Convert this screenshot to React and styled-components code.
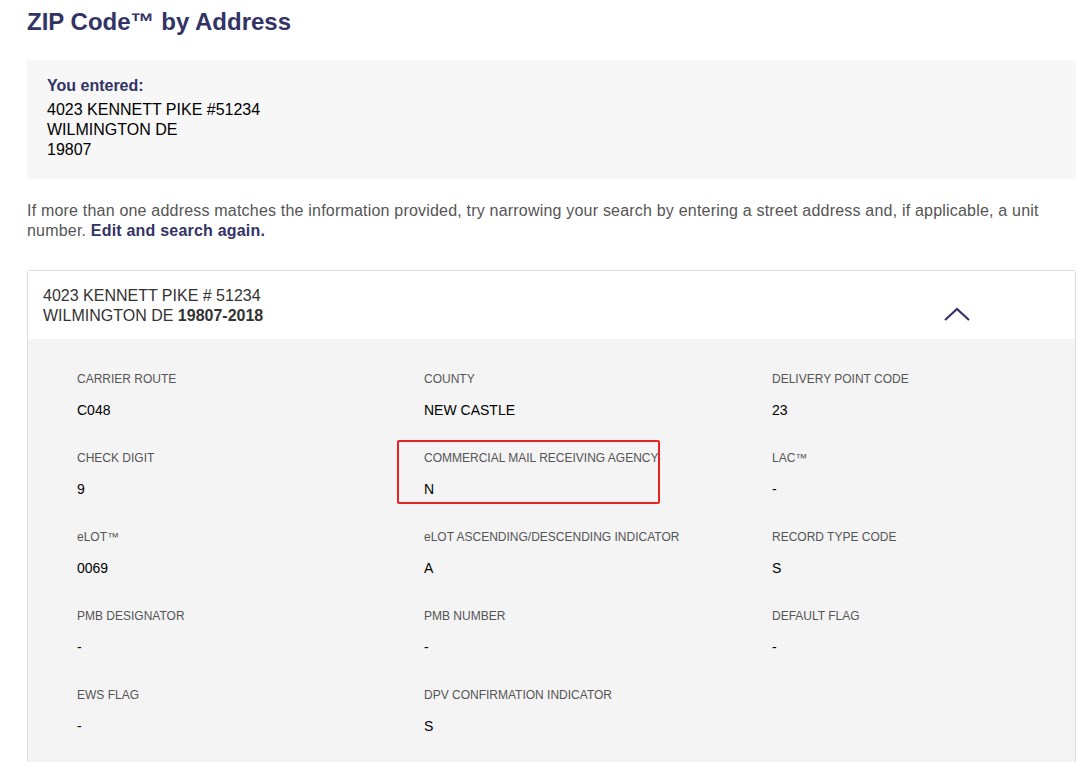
import React from "react";
import styled, { createGlobalStyle } from "styled-components";

const GlobalStyle = createGlobalStyle`
  body {
    margin: 0;
    background: #fff;
    font-family: "Liberation Sans", Arial, sans-serif;
    color: #000;
  }
`;

const Page = styled.div`
  padding: 0 2px 0 27px;
  overflow: hidden;
  height: 762px;
`;

const Title = styled.h1`
  margin: 0;
  padding-top: 8px;
  font-size: 24px;
  font-weight: 700;
  line-height: 28px;
  color: #333366;
`;

const EnteredBox = styled.div`
  margin-top: 24px;
  background: #f7f7f7;
  padding: 16px 20px 19px;
  font-size: 16px;
  line-height: 20px;
`;

const EnteredLabel = styled.div`
  font-weight: 700;
  color: #333366;
  margin-bottom: 4px;
`;

const Note = styled.p`
  margin: 22px 0 29px;
  padding-right: 30px;
  font-size: 16px;
  letter-spacing: 0.2px;
  line-height: 20px;
  color: #555;
`;

const NoteLink = styled.a`
  font-weight: 700;
  color: #333366;
  text-decoration: none;
`;

const Card = styled.div`
  border: 1px solid #ddd;
  border-radius: 3px;
  border-bottom: none;
`;

const CardHeader = styled.div`
  display: flex;
  align-items: center;
  justify-content: space-between;
  background: #fff;
  padding: 15px 104px 13px 15px;
  font-size: 16px;
  line-height: 20px;
  color: #333;
`;

const Chevron = styled.svg`
  width: 28px;
  height: 16px;
  margin-top: 16px;
`;

const Details = styled.div`
  display: grid;
  grid-template-columns: 347px 348px 1fr;
  row-gap: 27px;
  background: #f4f4f4;
  padding: 33px 0 40px 49px;
`;

const Cell = styled.div`
  position: relative;
`;

const Label = styled.div`
  font-size: 12px;
  line-height: 14px;
  color: #555;
`;

const Value = styled.div`
  margin-top: 10px;
  font-size: 14px;
  line-height: 28px;
  color: #000;
`;

const Highlight = styled.div`
  position: absolute;
  left: -27px;
  top: -11px;
  width: 263px;
  height: 64px;
  border: 2px solid #e62323;
  border-radius: 2px;
  box-sizing: border-box;
  pointer-events: none;
`;

const fields = [
  { label: "CARRIER ROUTE", value: "C048" },
  { label: "COUNTY", value: "NEW CASTLE" },
  { label: "DELIVERY POINT CODE", value: "23" },
  { label: "CHECK DIGIT", value: "9" },
  { label: "COMMERCIAL MAIL RECEIVING AGENCY", value: "N", marked: true },
  { label: "LAC™", value: "-" },
  { label: "eLOT™", value: "0069" },
  { label: "eLOT ASCENDING/DESCENDING INDICATOR", value: "A" },
  { label: "RECORD TYPE CODE", value: "S" },
  { label: "PMB DESIGNATOR", value: "-" },
  { label: "PMB NUMBER", value: "-" },
  { label: "DEFAULT FLAG", value: "-" },
  { label: "EWS FLAG", value: "-" },
  { label: "DPV CONFIRMATION INDICATOR", value: "S" },
];

const App = () => {
  return (
    <Page>
      <GlobalStyle />
      <Title>ZIP Code™ by Address</Title>

      <EnteredBox>
        <EnteredLabel>You entered:</EnteredLabel>
        <div>4023 KENNETT PIKE #51234</div>
        <div>WILMINGTON DE</div>
        <div>19807</div>
      </EnteredBox>

      <Note>
        If more than one address matches the information provided, try
        narrowing your search by entering a street address and, if applicable,
        a unit number. <NoteLink href="#">Edit and search again.</NoteLink>
      </Note>

      <Card>
        <CardHeader>
          <div>
            <div>4023 KENNETT PIKE # 51234</div>
            <div>
              WILMINGTON DE <b>19807-2018</b>
            </div>
          </div>
          <Chevron viewBox="0 0 28 16">
            <path
              d="M2 14 L14 3 L26 14"
              fill="none"
              stroke="#333366"
              strokeWidth="2.2"
            />
          </Chevron>
        </CardHeader>
        <Details>
          {fields.map((f) => (
            <Cell key={f.label}>
              {f.marked && <Highlight />}
              <Label>{f.label}</Label>
              <Value>{f.value}</Value>
            </Cell>
          ))}
        </Details>
      </Card>
    </Page>
  );
};

export default App;
